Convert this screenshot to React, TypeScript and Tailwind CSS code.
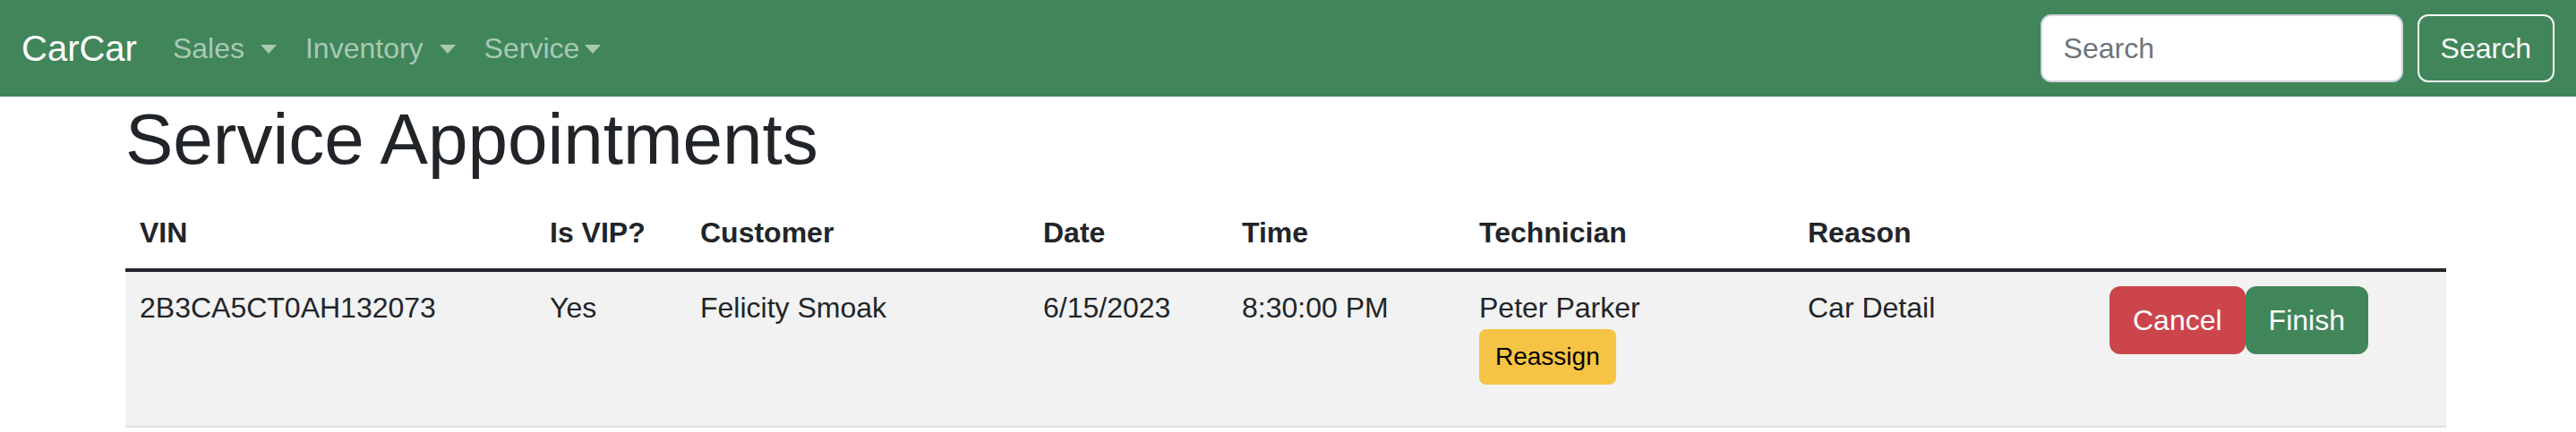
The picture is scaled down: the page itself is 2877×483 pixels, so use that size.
import React from 'react';

interface Appointment {
  vin: string;
  vip: boolean;
  customer: string;
  date: string;
  time: string;
  technician: string;
  reason: string;
}

const appointments: Appointment[] = [
  {
    vin: '2B3CA5CT0AH132073',
    vip: true,
    customer: 'Felicity Smoak',
    date: '6/15/2023',
    time: '8:30:00 PM',
    technician: 'Peter Parker',
    reason: 'Car Detail',
  },
];

const columns = [
  { label: 'VIN', width: 'w-[458px]' },
  { label: 'Is VIP?', width: 'w-[168px]' },
  { label: 'Customer', width: 'w-[383px]' },
  { label: 'Date', width: 'w-[222px]' },
  { label: 'Time', width: 'w-[265px]' },
  { label: 'Technician', width: 'w-[367px]' },
  { label: 'Reason', width: 'w-[337px]' },
  { label: '', width: 'w-[392px]' },
];

const NavDropdown: React.FC<{ label: string; tight?: boolean }> = ({ label, tight }) => (
  <li>
    <a href="#" className="flex items-center px-[16px] py-[8px] text-[32px] leading-[48px] text-[#a9c8b5]">
      {label}
      <span
        className={
          tight
            ? 'ml-[6px] mt-[2px] h-0 w-0 border-x-[9px] border-t-[10px] border-x-transparent border-t-[#a9c8b5]'
            : 'ml-[18px] mt-[2px] h-0 w-0 border-x-[9px] border-t-[10px] border-x-transparent border-t-[#a9c8b5]'
        }
      />
    </a>
  </li>
);

export default function App() {
  return (
    <div className="min-h-[483px] bg-white font-['Liberation_Sans',Arial,sans-serif] text-[32px] leading-[48px] text-[#212529]">
      <nav className="flex h-[108px] items-center justify-between bg-[#41865a] px-[24px]">
        <div className="flex items-center">
          <a href="#" className="mr-[24px] py-[10px] text-[40px] leading-[60px] text-white">
            CarCar
          </a>
          <ul className="flex">
            <NavDropdown label="Sales" />
            <NavDropdown label="Inventory" />
            <NavDropdown label="Service" tight />
          </ul>
        </div>
        <form className="flex gap-[16px]" onSubmit={(e) => e.preventDefault()}>
          <input
            type="search"
            placeholder="Search"
            className="h-[76px] w-[405px] rounded-[12px] border-2 border-[#ced4da] bg-white px-[24px] text-[32px] text-[#212529] outline-none placeholder:text-[#6c757d]"
          />
          <button
            type="submit"
            className="h-[76px] rounded-[12px] border-2 border-[#f8f9fa] px-[24px] text-[32px] text-[#f8f9fa]"
          >
            Search
          </button>
        </form>
      </nav>

      <div className="mx-auto w-[2597px]">
        <h1 className="mb-[16px] text-[80px] font-medium leading-[96px]">Service Appointments</h1>
        <table className="w-[2592px] table-fixed border-collapse text-left">
          <colgroup>
            {columns.map((c, i) => (
              <col key={i} className={c.width} />
            ))}
          </colgroup>
          <thead>
            <tr className="border-b-[4px] border-[#212529]">
              {columns.map((c, i) => (
                <th key={i} className="p-[16px] align-bottom font-bold">
                  {c.label}
                </th>
              ))}
            </tr>
          </thead>
          <tbody>
            {appointments.map((a) => (
              <tr key={a.vin} className="border-b-2 border-[#dee2e6] bg-[#f2f2f2] align-top">
                <td className="p-[16px]">{a.vin}</td>
                <td className="p-[16px]">{a.vip ? 'Yes' : 'No'}</td>
                <td className="p-[16px]">{a.customer}</td>
                <td className="p-[16px]">{a.date}</td>
                <td className="p-[16px]">{a.time}</td>
                <td className="p-[16px]">
                  <div>{a.technician}</div>
                  <div className="mb-[30px]">
                    <button className="block rounded-[8px] border-2 border-[#f6c344] bg-[#f6c344] px-[16px] py-[8px] text-[28px] leading-[42px] text-black">
                      Reassign
                    </button>
                  </div>
                </td>
                <td className="p-[16px]">{a.reason}</td>
                <td className="p-[16px]">
                  <div className="flex">
                    <button className="h-[76px] rounded-[12px] border-2 border-[#cc454b] bg-[#cc454b] px-[24px] text-white">
                      Cancel
                    </button>
                    <button className="h-[76px] rounded-[12px] border-2 border-[#41865a] bg-[#41865a] px-[24px] text-white">
                      Finish
                    </button>
                  </div>
                </td>
              </tr>
            ))}
          </tbody>
        </table>
      </div>
    </div>
  );
}
